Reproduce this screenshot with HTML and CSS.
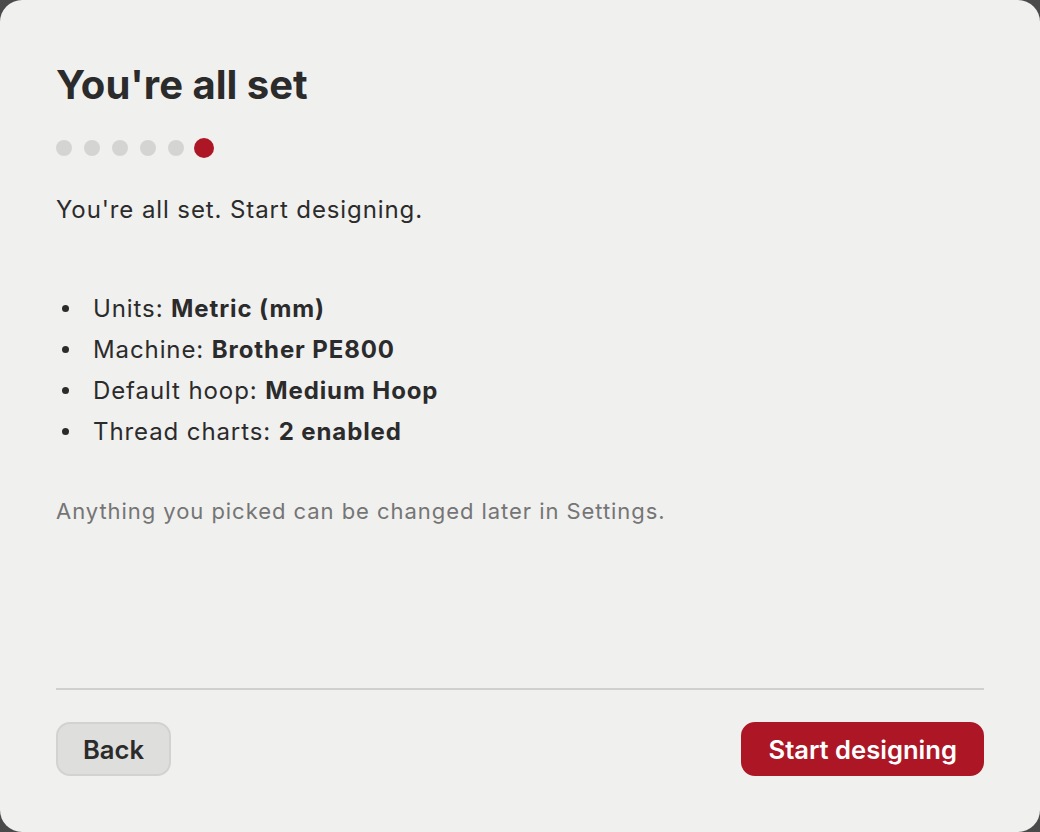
FILE: index.html
```html
<!DOCTYPE html>
<html>
<head>
<meta charset="utf-8">
<link rel="stylesheet" href="styles.css">
</head>
<body>
<div class="card">
  <div class="content">
    <h1 class="title">You're all set</h1>
    <div class="steps">
      <span class="dot"></span><span class="dot"></span><span class="dot"></span><span class="dot"></span><span class="dot"></span><span class="dot active"></span>
    </div>
    <p class="lead">You're all set. Start designing.</p>
    <ul class="summary">
      <li><span>Units: <b>Metric (mm)</b></span></li>
      <li><span>Machine: <b>Brother PE800</b></span></li>
      <li><span>Default hoop: <b>Medium Hoop</b></span></li>
      <li><span>Thread charts: <b>2 enabled</b></span></li>
    </ul>
    <p class="note">Anything you picked can be changed later in Settings.</p>
  </div>
  <div class="footer">
    <button class="btn btn-secondary">Back</button>
    <button class="btn btn-primary">Start designing</button>
  </div>
</div>
</body>
</html>
```
FILE: styles.css
```css
html, body {
  margin: 0;
  padding: 0;
  height: 100%;
}
body {
  background: #4a4a4a;
  font-family: Inter, "Noto Sans", sans-serif;
  color: #2b2b2b;
}
.card {
  box-sizing: border-box;
  height: 832px;
  background: #f0f0ef;
  border-radius: 22px;
  padding: 56px 56px 56px 56px;
  display: flex;
  flex-direction: column;
}
.content {
  flex: 1;
}
.title {
  margin: 7px 0 0 0;
  font-size: 40px;
  font-weight: 700;
  line-height: 44px;
}
.steps {
  display: flex;
  align-items: center;
  gap: 12px;
  margin-top: 31px;
  height: 20px;
}
.dot {
  width: 16px;
  height: 16px;
  border-radius: 50%;
  background: #d4d4d3;
}
.dot.active {
  width: 20px;
  height: 20px;
  background: #ad1625;
  margin-left: -2px;
}
.lead {
  margin: 37px 0 0 0;
  font-size: 24px;
  line-height: 30px;
  letter-spacing: 0.9px;
}
.summary {
  margin: 63px 0 0 0;
  padding: 0;
  list-style: none;
  font-size: 24px;
  line-height: 41px;
  letter-spacing: 0.9px;
}
.summary li {
  display: flex;
  align-items: center;
}
.summary li::before {
  content: "";
  flex: none;
  width: 7px;
  height: 7px;
  border-radius: 50%;
  background: #2b2b2b;
  margin: 0 24px 0 6px;
}
.summary b {
  font-weight: 700;
}
.note {
  margin: 44px 0 0 0;
  font-size: 22px;
  line-height: 30px;
  letter-spacing: 0.95px;
  color: #757575;
}
.footer {
  border-top: 2px solid #d0d0cf;
  padding-top: 32px;
  display: flex;
  justify-content: space-between;
}
.btn {
  height: 54px;
  border-radius: 14px;
  font-family: Inter, "Noto Sans", sans-serif;
  font-size: 25.6px;
  font-weight: 600;
  padding: 0 25px;
}
.btn-secondary {
  background: #dededd;
  border: 2px solid #d2d2d1;
  color: #2b2b2b;
}
.btn-primary {
  background: #ad1625;
  border: 2px solid #ad1625;
  color: #ffffff;
}
```
